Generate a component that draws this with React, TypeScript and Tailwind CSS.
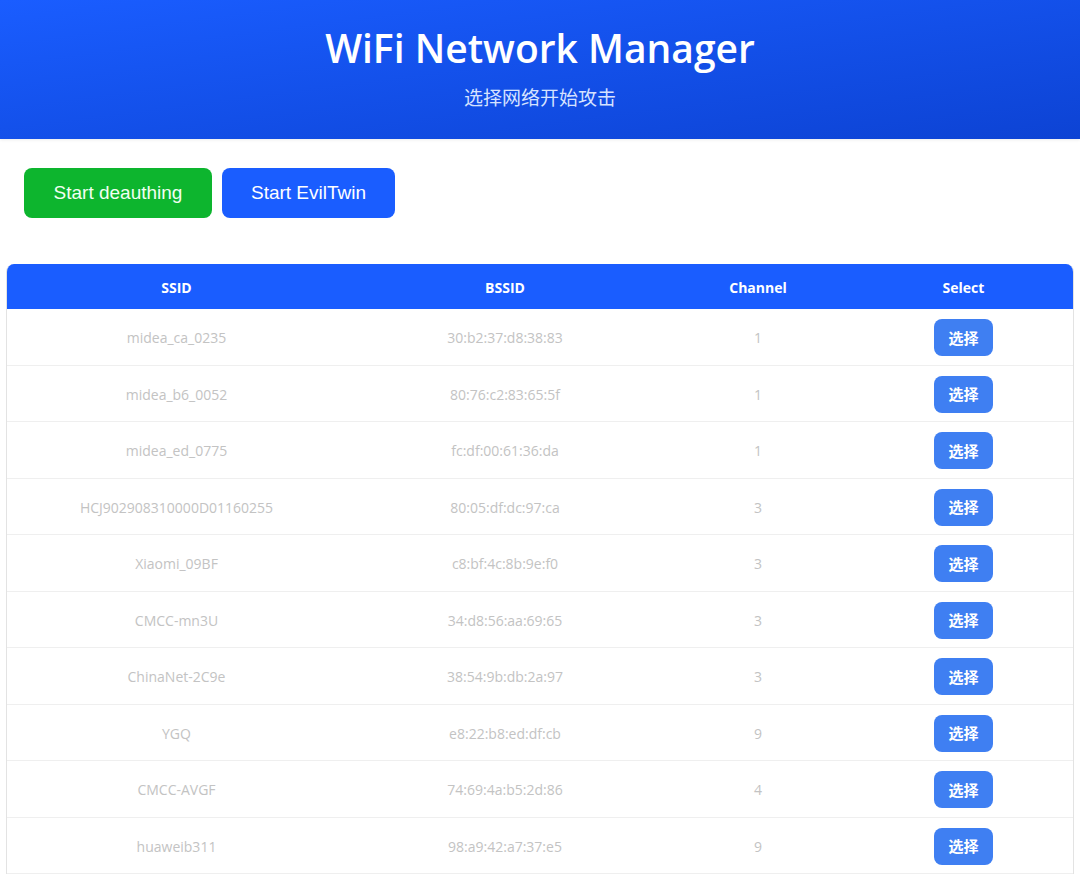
import React from "react";

const networks = [
  { ssid: "midea_ca_0235", bssid: "30:b2:37:d8:38:83", channel: 1 },
  { ssid: "midea_b6_0052", bssid: "80:76:c2:83:65:5f", channel: 1 },
  { ssid: "midea_ed_0775", bssid: "fc:df:00:61:36:da", channel: 1 },
  { ssid: "HCJ902908310000D01160255", bssid: "80:05:df:dc:97:ca", channel: 3 },
  { ssid: "Xiaomi_09BF", bssid: "c8:bf:4c:8b:9e:f0", channel: 3 },
  { ssid: "CMCC-mn3U", bssid: "34:d8:56:aa:69:65", channel: 3 },
  { ssid: "ChinaNet-2C9e", bssid: "38:54:9b:db:2a:97", channel: 3 },
  { ssid: "YGQ", bssid: "e8:22:b8:ed:df:cb", channel: 9 },
  { ssid: "CMCC-AVGF", bssid: "74:69:4a:b5:2d:86", channel: 4 },
  { ssid: "huaweib311", bssid: "98:a9:42:a7:37:e5", channel: 9 },
];

const uiFont = "font-['Open_Sans','Noto_Sans_CJK_SC',sans-serif]";
const grid = "grid grid-cols-[339px_318px_188px_223px]";

export default function App() {
  return (
    <div className={`min-h-screen bg-white ${uiFont}`}>
      {/* header */}
      <header className="h-[139px] bg-gradient-to-br from-[#1a5dff] to-[#0d43d4] flex flex-col items-center pt-[22px] shadow-[0_1px_3px_rgba(0,0,0,0.08)]">
        <h1 className="text-[39px] leading-[52px] font-semibold text-white">WiFi Network Manager</h1>
        <p className="mt-[12px] text-[19px] leading-[24px] text-[#d6e2ff]">选择网络开始攻击</p>
      </header>

      {/* actions */}
      <div className="flex gap-[10px] pl-[24px] pt-[29px]">
        <button className="w-[188px] h-[50px] rounded-[8px] bg-[#0db52e] text-[#f2fff2] text-[19px] font-['Liberation_Sans',Arial,sans-serif]">
          Start deauthing
        </button>
        <button className="w-[173px] h-[50px] rounded-[8px] bg-[#1a5dff] text-white text-[19px] font-['Liberation_Sans',Arial,sans-serif]">
          Start EvilTwin
        </button>
      </div>

      {/* table */}
      <div className="mx-[6px] mt-[46px] rounded-t-[8px] border-x border-[#e3e3e3] overflow-hidden">
        <div className={`${grid} h-[45px] items-center bg-[#1a5dff] text-white text-[14px] font-bold text-center pt-[1px]`}>
          <div>SSID</div>
          <div>BSSID</div>
          <div>Channel</div>
          <div>Select</div>
        </div>
        {networks.map((n) => (
          <div
            key={n.bssid}
            className={`${grid} h-[56.5px] items-center border-b border-[#efefef] text-[14px] text-[#c3c3c3] text-center pt-[2px]`}
          >
            <div>{n.ssid}</div>
            <div>{n.bssid}</div>
            <div>{n.channel}</div>
            <div className="flex justify-center">
              <button className="w-[59px] h-[37px] rounded-[8px] bg-[#3f7ff2] text-white text-[15px] font-bold">选择</button>
            </div>
          </div>
        ))}
      </div>
    </div>
  );
}
